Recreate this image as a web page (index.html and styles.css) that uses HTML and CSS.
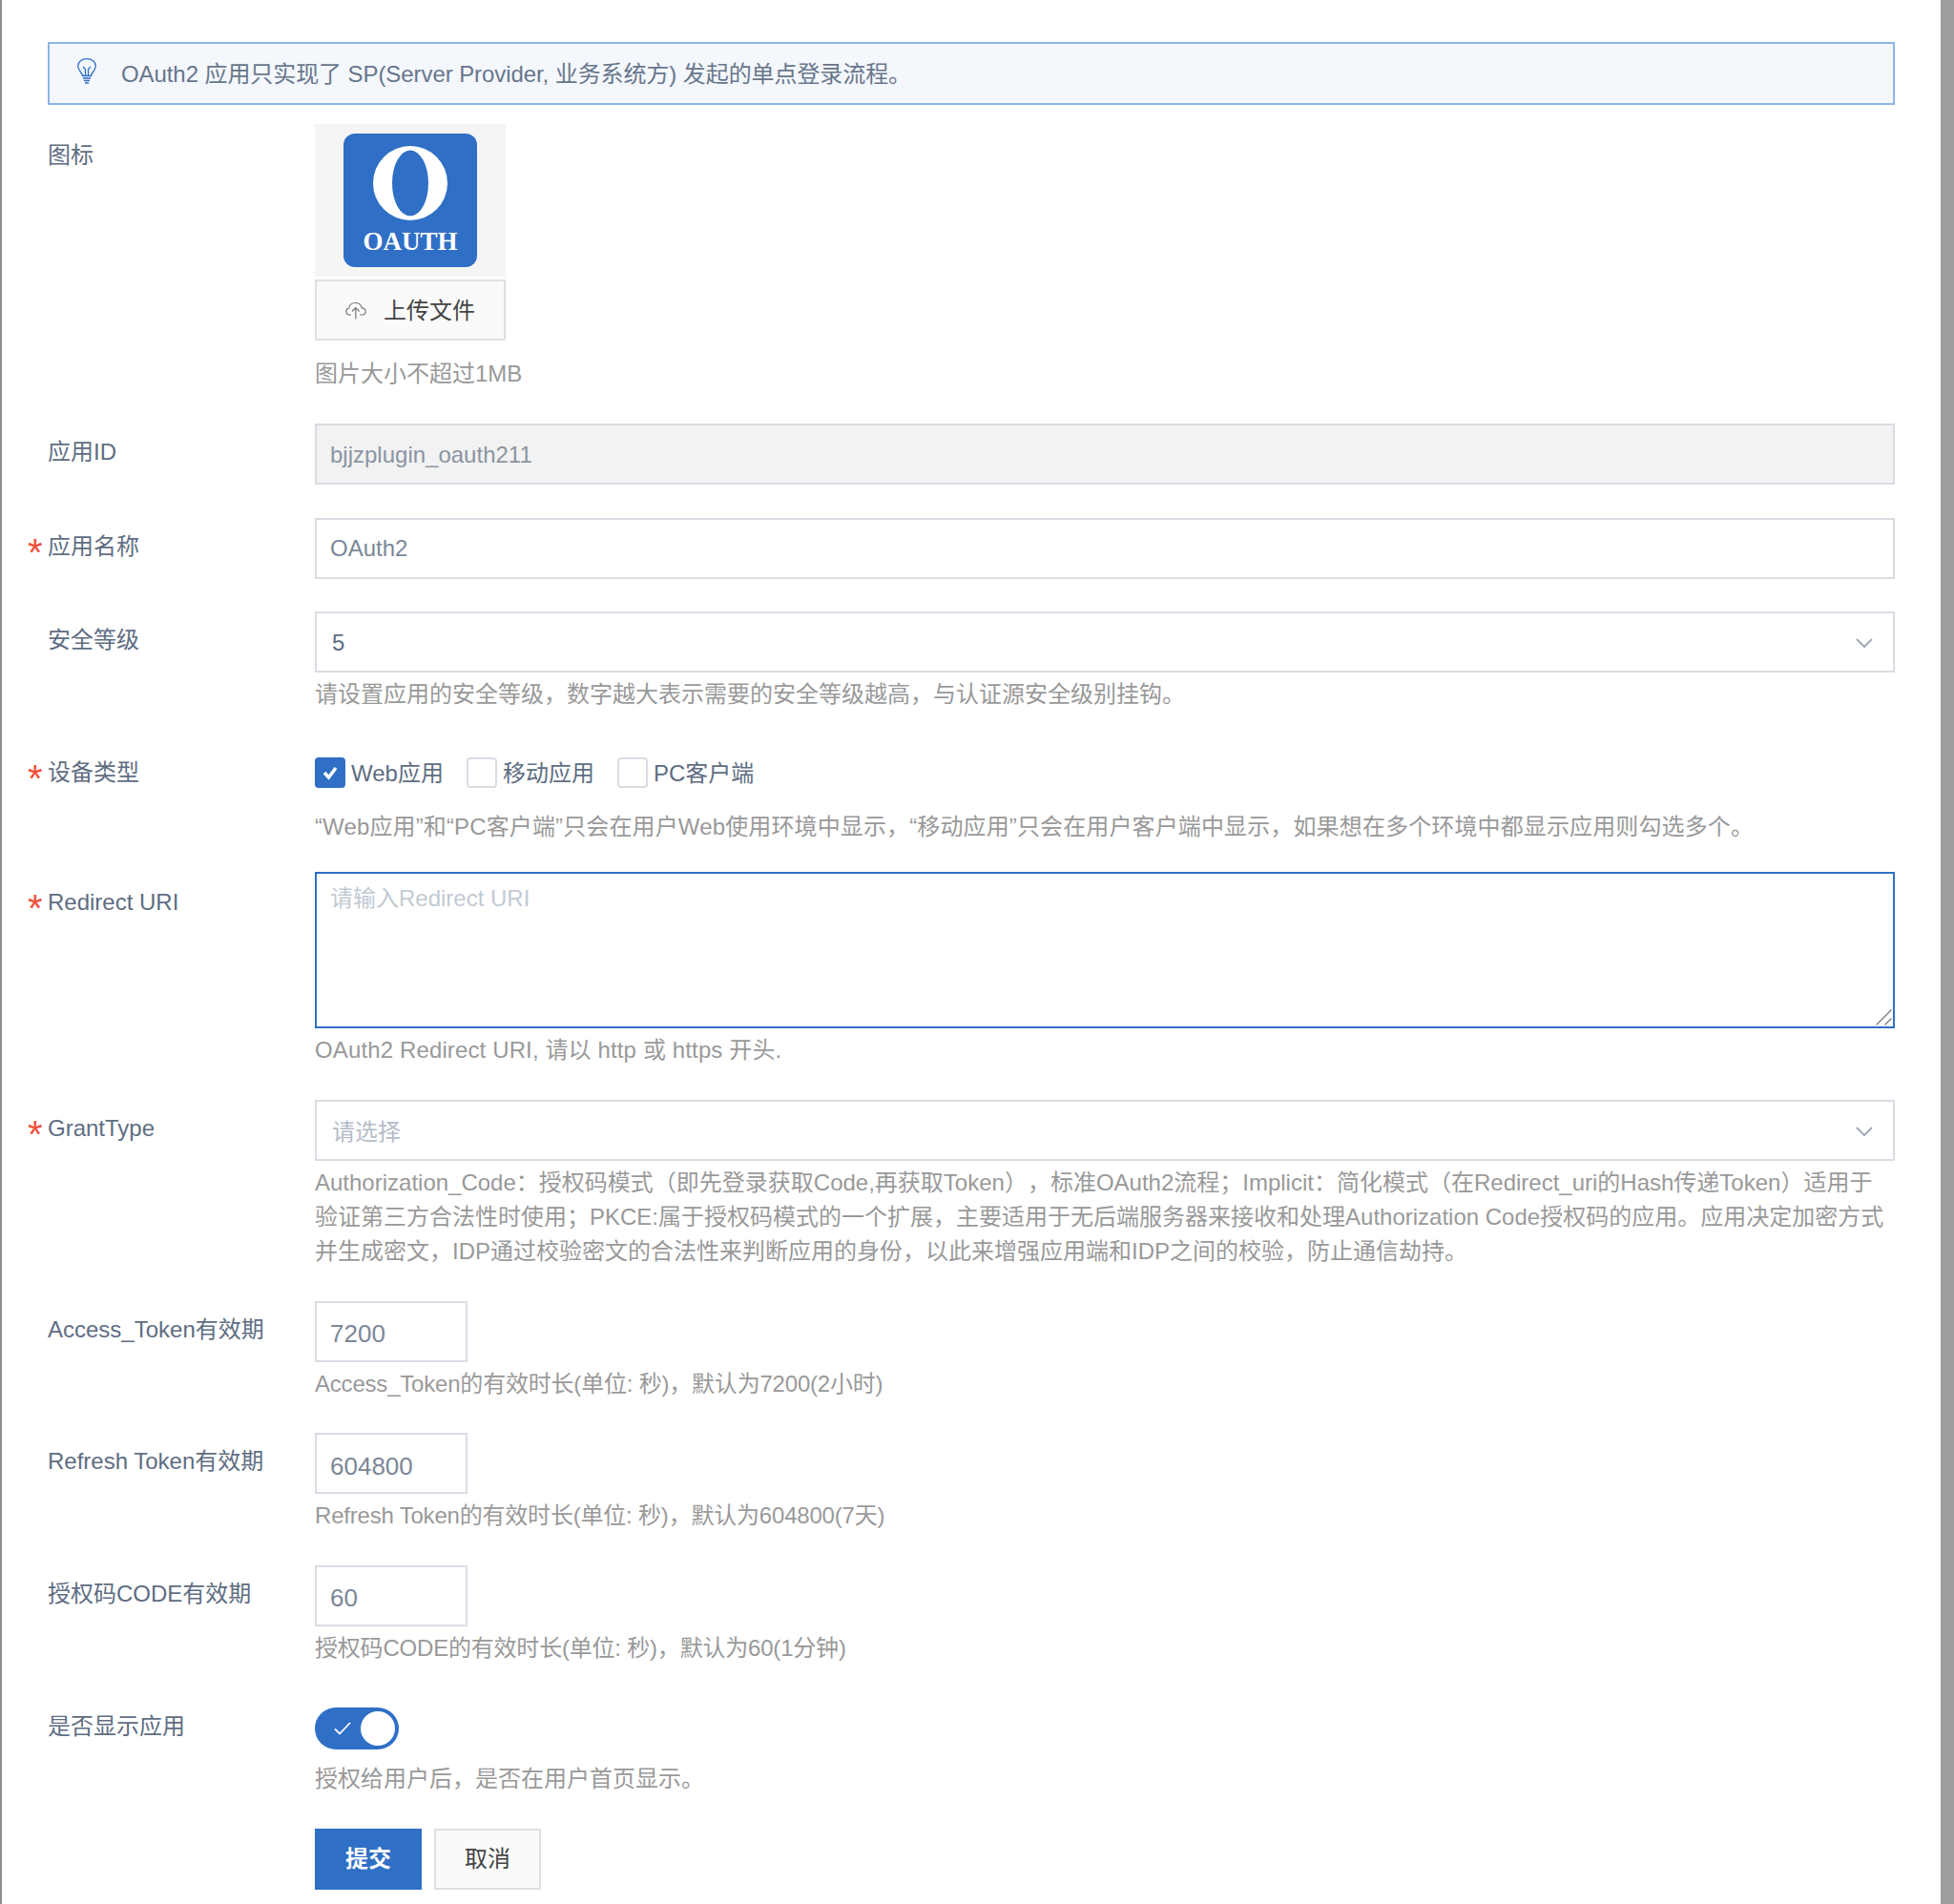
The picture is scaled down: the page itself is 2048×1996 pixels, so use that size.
FILE: index.html
```html
<!DOCTYPE html>
<html lang="zh-CN">
<head>
  <meta charset="UTF-8">
  <title>OAuth2 应用</title>
  <link rel="stylesheet" href="styles.css">
</head>
<body>
  <main class="page">
    <!-- Notice -->
    <div class="notice">
      <svg class="notice-icon" width="20" height="27" viewBox="0 0 20 27" fill="none" stroke="#2f6fc5" stroke-width="1.3">
        <path d="M5.5 18.5c0-3-4.8-5.6-4.8-10.2C.7 3.900 4.800.7 10 .7s9.300 3.200 9.300 7.600c0 4.600-4.800 7.200-4.800 10.200z"/>
        <path d="M6 9l2.500 2.500V18.500M14 9l-2.500 2.500V18.500"/>
        <path d="M6 21h8M7 23.500h6M8 26h4" stroke-width="1.500"/>
      </svg>
      <span class="notice-text lift">OAuth2 应用只实现了 SP(Server Provider, 业务系统方) 发起的单点登录流程。</span>
    </div>

    <form class="form">
      <!-- Icon upload -->
      <div class="row row-icon">
        <label class="label">图标</label>
        <div class="field">
          <div class="preview">
            <div class="logo">
              <svg class="logo-mark" width="78" height="78" viewBox="0 0 78 78">
                <circle cx="39" cy="39" r="39" fill="#fff"/>
                <ellipse cx="39" cy="39" rx="19" ry="34.500" fill="#2f6fc5"/>
              </svg>
              <span class="logo-name">OAUTH</span>
            </div>
          </div>
          <button type="button" class="btn-upload">
            <svg width="22" height="22" viewBox="0 0 22 22" fill="none" stroke="#777" stroke-width="1.200">
              <path d="M6 16H4.500C2.300 16 .8 14.400 .8 12.500c0-1.800 1.300-3.200 3-3.500C4.300 5.800 7 3.500 10.500 3.500c3.400 0 6 2.200 6.700 5.400 2.300.1 4 1.700 4 3.700 0 1.900-1.500 3.400-3.700 3.400H15"/>
              <path d="M10.800 20.500V9M7 12.500l3.800-3.800 3.800 3.800"/>
            </svg>
            <span class="lift">上传文件</span>
          </button>
          <p class="hint hint-upload">图片大小不超过1MB</p>
        </div>
      </div>

      <div class="row">
        <label class="label">应用ID</label>
        <div class="field">
          <input class="input" type="text" value="bjjzplugin_oauth211" disabled>
        </div>
      </div>

      <div class="row">
        <label class="label required">应用名称</label>
        <div class="field">
          <input class="input" type="text" value="OAuth2">
        </div>
      </div>

      <div class="row row-level">
        <label class="label">安全等级</label>
        <div class="field">
          <div class="select">
            <span>5</span>
            <svg width="18" height="11" viewBox="0 0 18 11" fill="none" stroke="#a3abb7" stroke-width="2"><path d="M1 1l8 8 8-8"/></svg>
          </div>
          <p class="hint">请设置应用的安全等级，数字越大表示需要的安全等级越高，与认证源安全级别挂钩。</p>
        </div>
      </div>

      <div class="row row-device">
        <label class="label required">设备类型</label>
        <div class="field">
          <div class="checks">
            <label class="check">
              <span class="box checked">
                <svg width="20" height="18" viewBox="0 0 20 18" fill="none" stroke="#fff" stroke-width="3.500"><path d="M4 9l4.500 5L16 4"/></svg>
              </span>
              <span class="lift">Web应用</span>
            </label>
            <label class="check"><span class="box"></span><span class="lift">移动应用</span></label>
            <label class="check"><span class="box"></span><span class="lift">PC客户端</span></label>
          </div>
          <p class="hint hint-device">“Web应用”和“PC客户端”只会在用户Web使用环境中显示，“移动应用”只会在用户客户端中显示，如果想在多个环境中都显示应用则勾选多个。</p>
        </div>
      </div>

      <div class="row row-redirect">
        <label class="label required">Redirect URI</label>
        <div class="field">
          <div class="textarea-wrap">
            <textarea class="textarea" placeholder="请输入Redirect URI"></textarea>
            <svg class="resizer" width="17" height="17" viewBox="0 0 17 17" fill="none" stroke="#777" stroke-width="1.200"><path d="M.5 16.500l16-16M9.500 16.500l7-7"/></svg>
          </div>
          <p class="hint hint-redirect">OAuth2 Redirect URI, 请以 http 或 https 开头.</p>
        </div>
      </div>

      <div class="row">
        <label class="label required">GrantType</label>
        <div class="field">
          <div class="select">
            <span class="placeholder lift">请选择</span>
            <svg width="18" height="11" viewBox="0 0 18 11" fill="none" stroke="#a3abb7" stroke-width="2"><path d="M1 1l8 8 8-8"/></svg>
          </div>
          <p class="hint">Authorization_Code：授权码模式（即先登录获取Code,再获取Token），标准OAuth2流程；Implicit：简化模式（在Redirect_uri的Hash传递Token）适用于验证第三方合法性时使用；PKCE:属于授权码模式的一个扩展，主要适用于无后端服务器来接收和处理Authorization Code授权码的应用。应用决定加密方式并生成密文，IDP通过校验密文的合法性来判断应用的身份，以此来增强应用端和IDP之间的校验，防止通信劫持。</p>
        </div>
      </div>

      <div class="row">
        <label class="label">Access_Token有效期</label>
        <div class="field">
          <input class="input input-short" type="text" value="7200">
          <p class="hint hint-tight">Access_Token的有效时长(单位: 秒)，默认为7200(2小时)</p>
        </div>
      </div>

      <div class="row">
        <label class="label">Refresh Token有效期</label>
        <div class="field">
          <input class="input input-short" type="text" value="604800">
          <p class="hint hint-tight">Refresh Token的有效时长(单位: 秒)，默认为604800(7天)</p>
        </div>
      </div>

      <div class="row">
        <label class="label">授权码CODE有效期</label>
        <div class="field">
          <input class="input input-short" type="text" value="60">
          <p class="hint hint-tight">授权码CODE的有效时长(单位: 秒)，默认为60(1分钟)</p>
        </div>
      </div>

      <div class="row">
        <label class="label">是否显示应用</label>
        <div class="field">
          <div class="switch-line">
            <span class="switch">
              <svg width="20" height="16" viewBox="0 0 20 16" fill="none" stroke="#fff" stroke-width="1.800"><path d="M2 8.500l5 5L18 2"/></svg>
              <span class="knob"></span>
            </span>
          </div>
          <p class="hint hint-switch">授权给用户后，是否在用户首页显示。</p>
        </div>
      </div>

      <div class="row row-actions">
        <div class="label"></div>
        <div class="field actions">
          <button type="button" class="btn btn-primary"><span class="lift">提交</span></button>
          <button type="button" class="btn btn-default"><span class="lift">取消</span></button>
        </div>
      </div>
    </form>
  </main>
  <div class="scrollbar"></div>
</body>
</html>
```

FILE: styles.css
```css
/* General */
html, body {
  height: 1996px;
  overflow: hidden;
}

body {
  margin: 0;
  display: flex;
  background: #fff;
  font-family: "Liberation Sans", "Noto Sans CJK SC", sans-serif;
  font-size: 24px;
  color: #5e6d82;
  text-spacing-trim: space-all;
  border-left: 2px solid #8c8c8c;
  box-sizing: border-box;
}

.page {
  flex: 1;
  min-width: 0;
  padding: 44px 48px 0 48px;
}

.scrollbar {
  width: 14px;
  background: #9e9e9e;
}

/* CJK fallback sits low next to the original font */
.lift {
  position: relative;
  top: -2px;
}

/* Notice */
.notice {
  display: flex;
  align-items: center;
  height: 66px;
  box-sizing: border-box;
  padding: 0 0 0 29px;
  gap: 26px;
  background: #f4f7fc;
  border: 2px solid #8db5e6;
  color: #67768b;
  margin-bottom: 20px;
}

.notice-icon {
  margin-top: -6px;
}

.notice-text {
  letter-spacing: -.08px;
}

/* Form rows */
.row {
  display: flex;
  margin-bottom: 34.6px;
}

.label {
  position: relative;
  width: 280px;
  flex: none;
  line-height: 60px;
  white-space: nowrap;
}

.row-icon .label {
  padding-top: 3px;
}

.row-device .label,
.row-redirect .label {
  padding-top: 2px;
}

.required::before {
  content: "*";
  position: absolute;
  left: -21px;
  top: 6px;
  font-size: 40px;
  color: #f0503c;
}

.row-device .required::before,
.row-redirect .required::before {
  top: 8px;
}

.field {
  flex: 1;
  min-width: 0;
}

.hint {
  margin: 5px 0 -1px;
  font-size: 24px;
  line-height: 36px;
  color: #999;
}

.hint-upload {
  margin: 17px 0 0;
}

.hint-device {
  margin: 7px 0 -3px;
  letter-spacing: .13px;
}

.hint-redirect {
  margin: 5px 0 0;
  letter-spacing: .13px;
}

.hint-tight {
  letter-spacing: -.2px;
}

.hint-switch {
  margin: 3px 0 -.5px;
}

.row-icon {
  margin-bottom: 34px;
}

.row-level {
  margin-bottom: 33px;
}

.row-device {
  margin-bottom: 32px;
}

.row-redirect {
  margin-bottom: 34px;
}

/* Icon upload */
.preview {
  width: 200px;
  height: 160px;
  background: #f5f5f5;
  display: flex;
  align-items: center;
  justify-content: center;
}

.logo {
  width: 140px;
  height: 140px;
  border-radius: 12px;
  background: #2f6fc5;
  color: #fff;
  display: flex;
  flex-direction: column;
  align-items: center;
}

.logo-mark {
  margin-top: 13px;
}

.logo-name {
  font-family: "Liberation Serif", serif;
  font-weight: bold;
  font-size: 27px;
  line-height: 30px;
  margin-top: 7px;
}

.btn-upload {
  display: flex;
  align-items: center;
  justify-content: center;
  gap: 18px;
  width: 200px;
  height: 64px;
  margin-top: 3px;
  background: #fafafa;
  border: 2px solid #e0e0e0;
  font: inherit;
  color: #444;
  padding: 0;
}

/* Inputs */
.input,
.select,
.textarea {
  display: block;
  width: 100%;
  box-sizing: border-box;
  border: 2px solid #d8dde4;
  background: #fff;
  font: inherit;
  color: #7b8798;
  outline: none;
  border-radius: 0;
}

.input {
  height: 64px;
  padding: 1px 14px 0;
}

.input:disabled {
  background: #f2f2f2;
  color: #8a94a3;
}

.input-short {
  width: 160px;
  font-size: 26px;
  padding-top: 6px;
}

.select {
  height: 64px;
  display: flex;
  align-items: center;
  justify-content: space-between;
  padding: 2px 21px 0 16px;
  color: #5e6d82;
}

.placeholder {
  color: #b4bcc8;
}

.textarea-wrap {
  position: relative;
}

.textarea {
  height: 164px;
  padding: 6px 14px;
  border-color: #2f6fc5;
  resize: none;
}

.textarea::placeholder {
  color: #c3cad4;
}

.resizer {
  position: absolute;
  right: 3px;
  bottom: 3px;
  pointer-events: none;
}

/* Checkboxes */
.checks {
  display: flex;
  align-items: center;
  height: 64px;
  gap: 24px;
}

.check {
  display: flex;
  align-items: center;
  gap: 6px;
}

.box {
  width: 32px;
  height: 32px;
  box-sizing: border-box;
  border: 2px solid #d8dde4;
  border-radius: 4px;
  display: flex;
  align-items: center;
  justify-content: center;
}

.box.checked {
  background: #2f6fc5;
  border-color: #2f6fc5;
}

/* Switch */
.switch-line {
  display: flex;
  align-items: center;
  height: 64px;
}

.switch {
  position: relative;
  width: 88px;
  height: 44px;
  border-radius: 22px;
  background: #2f6fc5;
  display: flex;
  align-items: center;
  padding-left: 19px;
  box-sizing: border-box;
}

.knob {
  position: absolute;
  right: 4px;
  top: 4px;
  width: 36px;
  height: 36px;
  border-radius: 50%;
  background: #fff;
}

/* Buttons */
.actions {
  display: flex;
  gap: 13px;
}

.btn {
  width: 112px;
  height: 64px;
  box-sizing: border-box;
  font: inherit;
  padding: 0;
}

.btn-primary {
  background: #2f6fc5;
  border: none;
  color: #fff;
  font-weight: bold;
}

.btn-default {
  background: #fafafa;
  border: 2px solid #e0e0e0;
  color: #444;
}

.row-actions {
  margin-bottom: 0;
}

.row-actions .label {
  line-height: 0;
}
```
